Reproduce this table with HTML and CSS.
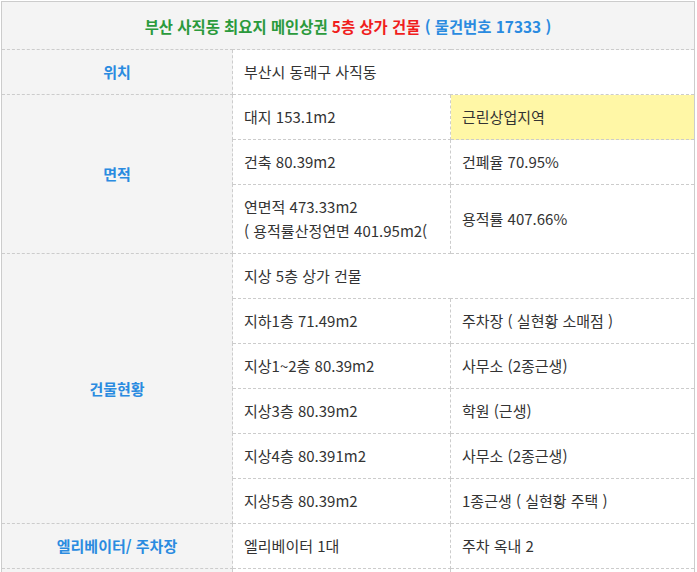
FILE: index.html
```html
<!DOCTYPE html>
<html lang="ko">
<head>
<meta charset="utf-8">
<link rel="stylesheet" href="styles.css">
</head>
<body>
<div class="wrap">
<table class="info">
  <colgroup>
    <col class="c1">
    <col class="c2">
    <col class="c3">
  </colgroup>
  <tr>
    <th class="title" colspan="3"><span class="g">부산 사직동 최요지 메인상권 </span><span class="r">5층 상가 건물</span><span class="b"> ( 물건번호 17333 )</span></th>
  </tr>
  <tr>
    <th class="label">위치</th>
    <td colspan="2">부산시 동래구 사직동</td>
  </tr>
  <tr>
    <th class="label" rowspan="3">면적</th>
    <td>대지 153.1m2</td>
    <td class="hl">근린상업지역</td>
  </tr>
  <tr>
    <td>건축 80.39m2</td>
    <td>건폐율 70.95%</td>
  </tr>
  <tr>
    <td>연면적 473.33m2<br>( 용적률산정연면 401.95m2(</td>
    <td>용적률 407.66%</td>
  </tr>
  <tr>
    <th class="label" rowspan="6">건물현황</th>
    <td colspan="2">지상 5층 상가 건물</td>
  </tr>
  <tr>
    <td>지하1층 71.49m2</td>
    <td>주차장 ( 실현황 소매점 )</td>
  </tr>
  <tr>
    <td>지상1~2층 80.39m2</td>
    <td>사무소 (2종근생)</td>
  </tr>
  <tr>
    <td>지상3층 80.39m2</td>
    <td>학원 (근생)</td>
  </tr>
  <tr>
    <td>지상4층 80.391m2</td>
    <td>사무소 (2종근생)</td>
  </tr>
  <tr>
    <td>지상5층 80.39m2</td>
    <td>1종근생 ( 실현황 주택 )</td>
  </tr>
  <tr>
    <th class="label">엘리베이터/ 주차장</th>
    <td>엘리베이터 1대</td>
    <td>주차 옥내 2</td>
  </tr>
  <tr>
    <th class="label">&nbsp;</th>
    <td>&nbsp;</td>
    <td>&nbsp;</td>
  </tr>
</table>
</div>
</body>
</html>
```
FILE: styles.css
```css
html, body {
  margin: 0;
  padding: 0;
  background: #ffffff;
}
.wrap {
  padding: 1px 0 0 1px;
}
.info {
  width: 693px;
  border-collapse: collapse;
  border: 1px solid #cccccc;
  font-family: "Noto Sans CJK KR", "Noto Sans", sans-serif;
  font-size: 15px;
  color: #333333;
  table-layout: fixed;
}
.c1 { width: 231px; }
.c2 { width: 218px; }
.c3 { width: 244px; }
.info th, .info td {
  border: 1px dashed #cccccc;
  padding: 10px 11px;
  line-height: 24px;
  text-align: left;
  vertical-align: middle;
  font-weight: normal;
}
.info th.title {
  background: #f4f4f4;
  text-align: center;
  font-weight: bold;
  font-size: 15.4px;
  padding: 12px 12px 11px;
}
.g { color: #2b9a3c; }
.r { color: #f01d1d; }
.b { color: #2a8be0; }
.info th.label {
  background: #f4f4f4;
  text-align: center;
  font-weight: bold;
  color: #2a8be0;
}
.info td.hl {
  background: #fff7a6;
}
```
